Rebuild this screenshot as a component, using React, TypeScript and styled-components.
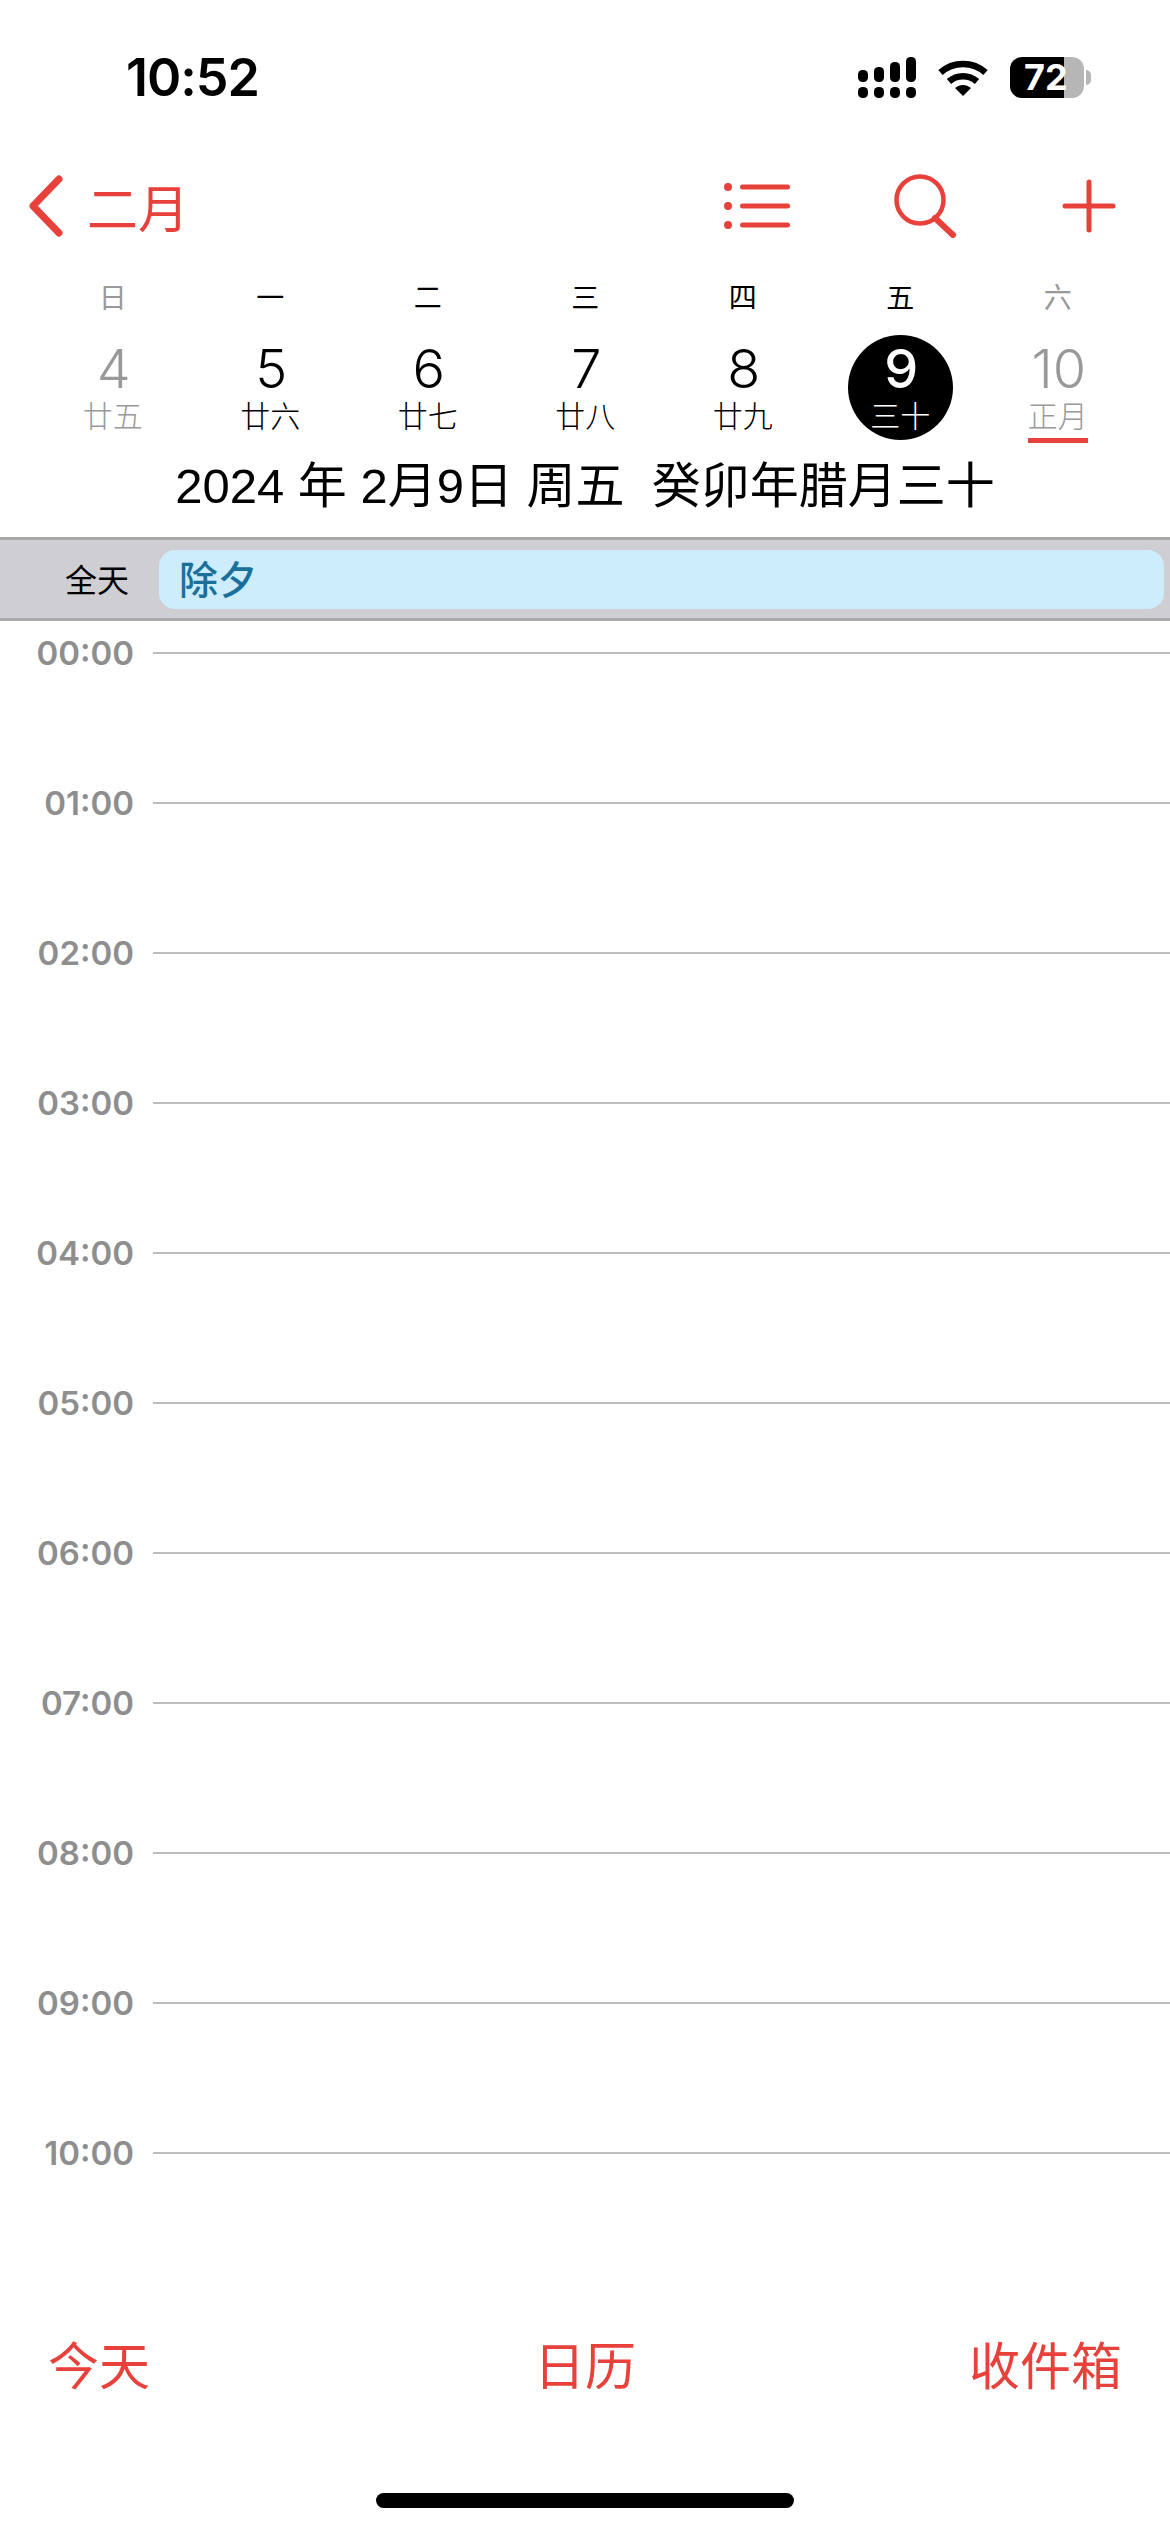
import React from 'react';
import styled, { createGlobalStyle } from 'styled-components';

const CJK = `"Noto Sans CJK SC", "Noto Sans", sans-serif`;
const LATIN = `Inter, "Noto Sans CJK SC", sans-serif`;
const RED = '#e8403a';

const GlobalStyle = createGlobalStyle`
  html, body {
    margin: 0;
    padding: 0;
    background: #fff;
  }
`;

// --- Layout ---
const Page = styled.div`
  width: 1170px;
  height: 2532px;
  display: flex;
  flex-direction: column;
  overflow: hidden;
  background: #fff;
  font-family: ${CJK};
`;

const StatusBar = styled.div`
  height: 57px;
  padding: 49px 86px 0 126px;
  display: flex;
  justify-content: space-between;
  align-items: center;
`;

const Clock = styled.div`
  font-family: ${LATIN};
  font-size: 52px;
  font-weight: 600;
  line-height: 57px;
  letter-spacing: -1px;
  color: #000;
`;

const StatusIcons = styled.div`
  display: flex;
  align-items: center;
  gap: 22px;
`;

const Battery = styled.div<{ $level: number }>`
  position: relative;
  width: 74px;
  height: 41px;
  border-radius: 12px;
  background: linear-gradient(
    to right,
    #000 ${p => p.$level}%,
    #b6b6b6 ${p => p.$level}%
  );
  color: #fff;
  font-family: ${LATIN};
  font-size: 36px;
  font-weight: 700;
  line-height: 41px;
  padding-left: 14px;
  box-sizing: border-box;

  &:after {
    content: '';
    position: absolute;
    left: 76px;
    top: 13px;
    width: 5px;
    height: 15px;
    border-radius: 0 8px 8px 0;
    background: #b6b6b6;
  }
`;

const NavBar = styled.div`
  height: 70px;
  margin-top: 65px;
  padding: 0 54px 0 26px;
  display: flex;
  align-items: center;
  color: ${RED};
`;

const BackButton = styled.div`
  display: flex;
  align-items: center;
  gap: 23px;
  flex: 1;
  font-size: 51px;
  line-height: 70px;
`;

const NavActions = styled.div`
  display: flex;
  align-items: center;
  gap: 104px;
`;

const WeekGrid = styled.div`
  margin-top: 34px;
  padding: 0 29px 0 34px;
  display: grid;
  grid-template-columns: repeat(7, 157.5px);
`;

const WeekDay = styled.div<{ $muted?: boolean }>`
  text-align: center;
  font-size: 28px;
  line-height: 42px;
  color: ${p => (p.$muted ? '#999' : '#000')};
`;

const DayCell = styled.div`
  display: flex;
  justify-content: center;
  margin-top: 18px;
`;

const DayInner = styled.div<{ $today?: boolean; $muted?: boolean }>`
  width: 105px;
  height: 105px;
  border-radius: 50%;
  display: flex;
  flex-direction: column;
  align-items: center;
  box-sizing: border-box;
  padding-top: 5px;
  background: ${p => (p.$today ? '#000' : 'transparent')};
  color: ${p => (p.$today ? '#fff' : p.$muted ? '#999' : '#000')};
`;

const DayNumber = styled.div<{ $today?: boolean }>`
  font-family: ${LATIN};
  font-size: 54px;
  font-weight: ${p => (p.$today ? 500 : 300)};
  line-height: 58px;
  padding-left: 2px;
`;

const Lunar = styled.div<{ $marked?: boolean }>`
  font-size: 30px;
  line-height: 32px;
  font-weight: 300;
  white-space: nowrap;
  padding-bottom: 8px;
  border-bottom: 5px solid ${p => (p.$marked ? RED : 'transparent')};
`;

const DateLine = styled.div`
  margin-top: 11px;
  text-align: center;
  font-family: "Liberation Sans", ${CJK};
  font-size: 49px;
  line-height: 70px;
  white-space: pre;
  color: #000;
`;

const AllDayBar = styled.div`
  margin-top: 16px;
  height: 84px;
  box-sizing: border-box;
  border-top: 3px solid #a9a9ac;
  border-bottom: 3px solid #a9a9ac;
  background: #cfced3;
  display: flex;
  align-items: center;
  padding-right: 6px;
`;

const AllDayLabel = styled.div`
  width: 129px;
  text-align: right;
  font-size: 32px;
  line-height: 44px;
  margin-bottom: 3px;
  color: #000;
  flex: none;
`;

const EventChip = styled.div`
  margin-left: 30px;
  flex: 1;
  height: 59px;
  padding-left: 20px;
  border-radius: 16px;
  background: #cdecfc;
  color: #1a6f9b;
  font-size: 39px;
  font-weight: 500;
  line-height: 54px;
`;

const Hours = styled.div`
  flex: 1;
  padding-top: 12px;
  display: flex;
  flex-direction: column;
  gap: 110px;
`;

const HourRow = styled.div`
  height: 40px;
  display: flex;
  align-items: center;
`;

const HourLabel = styled.div`
  width: 134px;
  flex: none;
  text-align: right;
  font-family: ${LATIN};
  font-size: 33px;
  font-weight: 600;
  line-height: 40px;
  color: #8e8e8e;
`;

const HourLine = styled.div`
  flex: 1;
  height: 2px;
  margin-left: 19px;
  background: #bdbdbd;
`;

const TabBar = styled.div`
  height: 70px;
  padding: 0 48px 0 48px;
  display: grid;
  grid-template-columns: 1fr auto 1fr;
  color: ${RED};
  font-size: 51px;
  line-height: 66px;
`;

const TabItem = styled.span<{ $align: string }>`
  text-align: ${p => p.$align};
`;

const HomeArea = styled.div`
  height: 132px;
  display: flex;
  justify-content: center;
`;

const HomeIndicator = styled.div`
  width: 418px;
  height: 15px;
  margin-top: 93px;
  border-radius: 8px;
  background: #000;
`;

// --- Icons ---
const SignalIcon = () => (
  <svg width="58" height="41" viewBox="0 0 58 41" fill="#000">
    <rect x="0" y="13" width="10" height="12" rx="4.5" />
    <rect x="16" y="10" width="10" height="15" rx="4.5" />
    <rect x="32" y="5" width="10" height="20" rx="4.5" />
    <rect x="48" y="0" width="10" height="25" rx="4.5" />
    <rect x="0" y="30" width="10" height="11" rx="4.5" />
    <rect x="16" y="30" width="10" height="11" rx="4.5" />
    <rect x="32" y="30" width="10" height="11" rx="4.5" />
    <rect x="48" y="30" width="10" height="11" rx="4.5" />
  </svg>
);

const WifiIcon = () => (
  <svg width="50" height="37" viewBox="0 0 50 37" fill="none">
    <path d="M2.5 13.5 C15 2 35 2 47.5 13.5" stroke="#000" strokeWidth="6.5" />
    <path d="M11 22.5 C19 15.5 31 15.5 39 22.5" stroke="#000" strokeWidth="6.5" />
    <path d="M17 29 C22 25 28 25 33 29 L25 37 Z" fill="#000" />
  </svg>
);

const ChevronIcon = () => (
  <svg width="38" height="62" viewBox="0 0 38 62" fill="none">
    <path d="M33 4 L7 31 L33 58" stroke={RED} strokeWidth="7" strokeLinecap="round" strokeLinejoin="round" />
  </svg>
);

const ListIcon = () => (
  <svg width="66" height="46" viewBox="0 0 66 46" fill={RED}>
    <circle cx="4" cy="4" r="4" />
    <circle cx="4" cy="23" r="4" />
    <circle cx="4" cy="42" r="4" />
    <rect x="16" y="1.5" width="50" height="5" rx="2.5" />
    <rect x="16" y="20.5" width="50" height="5" rx="2.5" />
    <rect x="16" y="39.5" width="50" height="5" rx="2.5" />
  </svg>
);

const SearchIcon = () => (
  <svg width="64" height="64" viewBox="0 0 64 64" fill="none" stroke={RED}>
    <circle cx="26" cy="26" r="23.5" strokeWidth="4.5" />
    <path d="M41 44 L59 61" strokeWidth="6" strokeLinecap="round" />
  </svg>
);

const PlusIcon = () => (
  <svg width="54" height="54" viewBox="0 0 54 54" fill="none" stroke={RED} strokeWidth="5" strokeLinecap="round">
    <path d="M27 3 V51" />
    <path d="M3 27 H51" />
  </svg>
);

// --- Data ---
const WEEK = [
  { label: '日', day: '4', lunar: '廿五', muted: true },
  { label: '一', day: '5', lunar: '廿六' },
  { label: '二', day: '6', lunar: '廿七' },
  { label: '三', day: '7', lunar: '廿八' },
  { label: '四', day: '8', lunar: '廿九' },
  { label: '五', day: '9', lunar: '三十', today: true },
  { label: '六', day: '10', lunar: '正月', muted: true, marked: true },
];

const HOURS = ['00:00', '01:00', '02:00', '03:00', '04:00', '05:00', '06:00', '07:00', '08:00', '09:00', '10:00'];

function App() {
  return (
    <Page>
      <GlobalStyle />
      <StatusBar>
        <Clock>10:52</Clock>
        <StatusIcons>
          <SignalIcon />
          <WifiIcon />
          <Battery $level={73}>72</Battery>
        </StatusIcons>
      </StatusBar>

      <NavBar>
        <BackButton>
          <ChevronIcon />
          二月
        </BackButton>
        <NavActions>
          <ListIcon />
          <SearchIcon />
          <PlusIcon />
        </NavActions>
      </NavBar>

      <WeekGrid>
        {WEEK.map(d => (
          <WeekDay key={d.label} $muted={d.muted}>{d.label}</WeekDay>
        ))}
        {WEEK.map(d => (
          <DayCell key={d.day}>
            <DayInner $today={d.today} $muted={d.muted}>
              <DayNumber $today={d.today}>{d.day}</DayNumber>
              <Lunar $marked={d.marked}>{d.lunar}</Lunar>
            </DayInner>
          </DayCell>
        ))}
      </WeekGrid>

      <DateLine>2024 年 2月9日 周五  癸卯年腊月三十</DateLine>

      <AllDayBar>
        <AllDayLabel>全天</AllDayLabel>
        <EventChip>除夕</EventChip>
      </AllDayBar>

      <Hours>
        {HOURS.map(h => (
          <HourRow key={h}>
            <HourLabel>{h}</HourLabel>
            <HourLine />
          </HourRow>
        ))}
      </Hours>

      <TabBar>
        <TabItem $align="left">今天</TabItem>
        <TabItem $align="center">日历</TabItem>
        <TabItem $align="right">收件箱</TabItem>
      </TabBar>

      <HomeArea>
        <HomeIndicator />
      </HomeArea>
    </Page>
  );
}

export default App;
